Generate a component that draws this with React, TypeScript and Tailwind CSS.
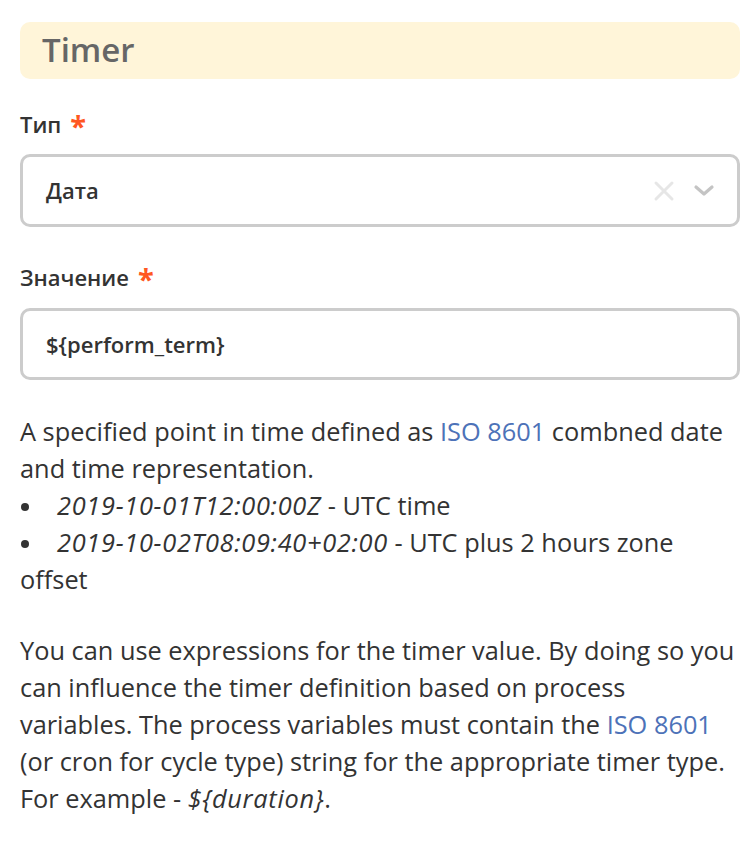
import React from "react";

const font = { fontFamily: '"Open Sans", "Noto Sans", sans-serif' };

function Bullet() {
  return (
    <span className="inline-block w-[37px]">
      <span className="ml-[1px] inline-block h-[8px] w-[8px] -translate-y-[4px] rounded-full bg-[#333333]" />
    </span>
  );
}

export default function App() {
  return (
    <div className="w-[756px] min-h-[849px] bg-white px-[20px] pt-[22px] text-[#333333]" style={font}>
      <div className="mr-[-4px] flex h-[57px] items-center rounded-[10px] bg-[#fff5d9] pl-[22px]">
        <span className="text-[33px] font-semibold leading-none text-[#666666] translate-y-[-1px]">Timer</span>
      </div>

      <div className="mt-[29px] flex items-center text-[22px] font-semibold leading-[32px] text-[#333333]">
        <span>Тип</span>
        <span className="ml-[9px] text-[29px] font-bold leading-none text-[#ff5722] translate-y-[1px]">*</span>
      </div>

      <div className="mr-[-4px] mt-[14px] flex h-[73px] items-center rounded-[10px] border-[3px] border-[#cccccc] pl-[23px] pr-[22px]">
        <span className="flex-1 text-[22px] font-semibold text-[#333333]">Дата</span>
        <svg width="22" height="22" viewBox="0 0 22 22" className="mr-[18px]">
          <path d="M3 3 L19 19 M19 3 L3 19" stroke="#e6e6e6" strokeWidth="3" strokeLinecap="round" />
        </svg>
        <svg width="22" height="14" viewBox="0 0 22 14">
          <path d="M3 3 L11 10 L19 3" stroke="#c4c4c4" strokeWidth="3.2" fill="none" strokeLinecap="round" strokeLinejoin="round" />
        </svg>
      </div>

      <div className="mt-[34px] flex items-center text-[22px] font-semibold leading-[32px] text-[#333333]">
        <span>Значение</span>
        <span className="ml-[9px] text-[29px] font-bold leading-none text-[#ff5722] translate-y-[1px]">*</span>
      </div>

      <div className="mr-[-4px] mt-[15px] flex h-[72px] items-center rounded-[10px] border-[3px] border-[#cccccc] pl-[23px]">
        <span className="text-[22px] font-semibold text-[#333333]">{"${perform_term}"}</span>
      </div>

      <div className="mr-[-4px] mt-[33px] text-[25.35px] leading-[37px] text-[#333333]">
        <p>
          A specified point in time defined as{" "}
          <span className="text-[#4d72b8]">ISO 8601</span> combned date and time representation.
        </p>
        <ul>
          <li>
            <Bullet />
            <i className="tracking-[0.7px]">2019-10-01T12:00:00Z</i> - UTC time
          </li>
          <li>
            <Bullet />
            <i className="tracking-[0.7px]">2019-10-02T08:09:40+02:00</i> - UTC plus 2 hours zone offset
          </li>
        </ul>
        <p className="mt-[34px]">
          You can use expressions for the timer value. By doing so you can influence the timer definition based on
          process variables. The process variables must contain the{" "}
          <span className="text-[#4d72b8]">ISO 8601</span> (or cron for cycle type) string for the appropriate timer
          type. For example - <i className="tracking-[0.7px]">{"${duration}"}</i>.
        </p>
      </div>
    </div>
  );
}
